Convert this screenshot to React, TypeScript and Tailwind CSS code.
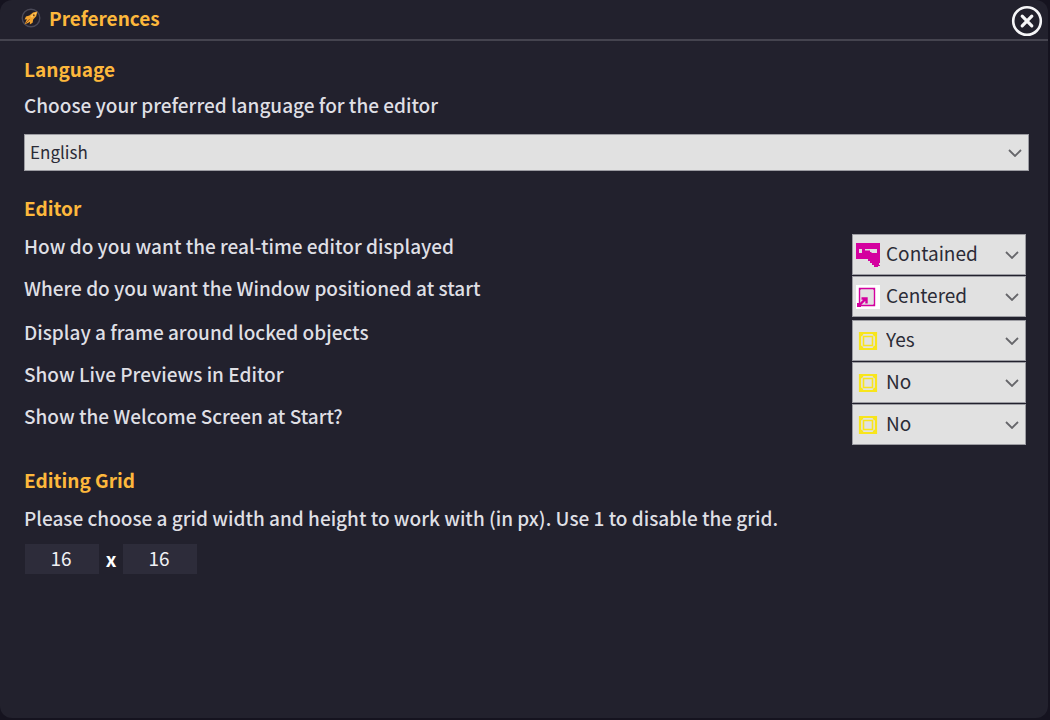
import { useState, type ReactNode } from "react";

function RocketIcon() {
  return (
    <svg viewBox="0 0 20 20" className="size-5" aria-hidden="true">
      <circle cx="10" cy="10" r="8.8" fill="#211f2a" stroke="#4a4957" strokeWidth="1.4" />
      <path d="M16.4 3.6 12 4.6 8.4 7.6 5 8.6 3.600 11.400 6 11.200 4.800 13.400 3.800 16.200 7 15 9 13.800 8.800 16.400 11.600 14.800 12.200 11.600 15.200 8.200Z" fill="#f3a530" />
      <path d="M15.6 4.400 12.400 5.400 9.400 8.400 11 9.800 14.400 7.200Z" fill="#ffc658" />
      <circle cx="12.800" cy="7.200" r="1" fill="#7a4616" />
      <path d="M4.800 15.200 8.600 11.200" stroke="#9a5218" strokeWidth="1" />
    </svg>
  );
}

function CloseIcon() {
  return (
    <svg viewBox="0 0 32 32" className="size-8" fill="none" stroke="#f6f6f8" aria-hidden="true">
      <circle cx="16" cy="16" r="13.8" strokeWidth="2.6" />
      <path d="M11.200 11.200 20.800 20.800M20.800 11.200 11.200 20.800" strokeWidth="3.2" strokeLinecap="round" />
    </svg>
  );
}

function ContainedIcon() {
  return (
    <svg viewBox="0 0 24 24" className="size-6" aria-hidden="true">
      <path
        fillRule="evenodd"
        fill="#d4009f"
        d="M0 0H24V20H23V22H24V23H22V24H18V22H16V20H14V18H12V16H0ZM3 6V10H6V6ZM9 6V7.500H14V9H15.500V10H21V6Z"
      />
    </svg>
  );
}

function CenteredIcon() {
  return (
    <svg viewBox="0 0 24 24" className="size-6" fill="none" stroke="#d4009f" aria-hidden="true">
      <path d="M0 0H24V24H0Z" fill="#fff" stroke="none" />
      <path d="M3.500 3.500H18.500V20.500H3.500Z" fill="#e1e1e1" strokeWidth="1.400" />
      <path d="M3 3H6L3 6ZM19 3V6L16 3ZM19 21H16L19 18ZM1 18H4V20H5V22H1Z" fill="#d4009f" stroke="none" />
      <path d="M2.500 21 10 13.500M5.500 13.500H10.500V18.500" strokeWidth="2.400" />
    </svg>
  );
}

function FrameIcon() {
  return (
    <svg viewBox="0 0 24 24" className="size-6" fill="none" stroke="#f8e51c" aria-hidden="true">
      <path d="M4 4H20V20H4Z" strokeWidth="2.200" />
      <path d="M4 4 6.500 6.500M20 4 17.500 6.500M4 20 6.500 17.500M20 20 17.500 17.500" strokeWidth="2.600" />
      <path d="M7.500 7.500H16.500V16.500H7.500Z" strokeWidth="1.600" />
    </svg>
  );
}

function Chevron() {
  return (
    <svg viewBox="0 0 14 8" className="h-2 w-3.5" fill="none" stroke="#66666a" strokeWidth="1.8" aria-hidden="true">
      <path d="M1 1 7 7 13 1" />
    </svg>
  );
}

type SelectProps = { id: string; options: string[]; value: string; icon?: ReactNode };

function Select({ id, options, value, icon }: SelectProps) {
  const [current, setCurrent] = useState(value);
  return (
    <div className="grid items-center border border-[#9c9ca2] bg-[#e1e1e1] text-[#2b2b36]">
      {icon && <span className="pointer-events-none z-10 col-start-1 row-start-1 ml-[3px] justify-self-start">{icon}</span>}
      <select
        id={id}
        value={current}
        onChange={(e) => setCurrent(e.target.value)}
        className={`col-start-1 row-start-1 w-full appearance-none bg-transparent ${icon ? "h-[39px] pb-0.5 pl-[33px] text-[19px]" : "h-[35px] pb-0.5 pl-[5px] text-[17px]"}`}
      >
        {options.map((o) => (
          <option key={o}>{o}</option>
        ))}
      </select>
      <span className="pointer-events-none col-start-1 row-start-1 mr-1.5 justify-self-end">
        <Chevron />
      </span>
    </div>
  );
}

const windowRows = [
  { id: "display", label: "How do you want the real-time editor displayed", value: "Contained", options: ["Contained", "Floating"], icon: <ContainedIcon /> },
  { id: "position", label: "Where do you want the Window positioned at start", value: "Centered", options: ["Centered", "Maximized"], icon: <CenteredIcon /> },
];

const toggleRows = [
  { id: "frame", label: "Display a frame around locked objects", value: "Yes", options: ["Yes", "No"], icon: <FrameIcon /> },
  { id: "previews", label: "Show Live Previews in Editor", value: "No", options: ["Yes", "No"], icon: <FrameIcon /> },
  { id: "welcome", label: "Show the Welcome Screen at Start?", value: "No", options: ["Yes", "No"], icon: <FrameIcon /> },
];

const heading = "leading-7 font-bold text-[#fdb83c]";
const field = "h-[30px] w-[74px] bg-[#2d2c3a] pr-0.5 pb-1 text-center text-[19px] text-[#f0f0f4]";

export default function App() {
  return (
    <div className="min-h-screen bg-[#15131f] pr-0.5 pb-0.5 font-['Noto_Sans_CJK_SC','Noto_Sans',sans-serif] text-[19px] text-[#dfdfe4]">
      <main className="flex min-h-[calc(100vh-2px)] flex-col rounded-xl bg-[#22212d]">
        <header className="flex h-[41px] items-center justify-between border-b-2 border-[#45444f] pr-[5px] pl-[21px]">
          <h1 className="flex items-center gap-2 pb-1 leading-7 font-bold text-[#fdb83c]">
            <RocketIcon />
            Preferences
          </h1>
          <button type="button" aria-label="Close" className="pt-0.5">
            <CloseIcon />
          </button>
        </header>

        <section className="pt-3.5 pr-[19px] pl-6">
          <h2 className={heading}>Language</h2>
          <label htmlFor="language" className="mt-2 mb-[15px] block leading-7 font-medium">
            Choose your preferred language for the editor
          </label>
          <Select id="language" value="English" options={["English", "Deutsch", "Español"]} />
        </section>

        <section className="pt-[23px] pr-[22px] pl-6">
          <h2 className={heading}>Editor</h2>
          <div className="mt-3 flex flex-col gap-0.5">
            {[windowRows, toggleRows].map((group) => (
              <div key={group[0].id}>
                {group.map((row) => (
                  <div key={row.id} className="grid h-[42px] grid-cols-[1fr_174px] items-start">
                    <label htmlFor={row.id} className="leading-6 font-medium">
                      {row.label}
                    </label>
                    <Select {...row} />
                  </div>
                ))}
              </div>
            ))}
          </div>
        </section>

        <section className="pt-5 pl-6">
          <h2 className={heading}>Editing Grid</h2>
          <p className="mt-2.5 leading-7 font-medium">Please choose a grid width and height to work with (in px). Use 1 to disable the grid.</p>
          <div className="mt-3 flex items-center pl-px">
            <input type="text" aria-label="Grid width" defaultValue="16" className={field} />
            <span className="w-6 text-center leading-7 font-bold text-white">x</span>
            <input type="text" aria-label="Grid height" defaultValue="16" className={field} />
          </div>
        </section>
      </main>
    </div>
  );
}
